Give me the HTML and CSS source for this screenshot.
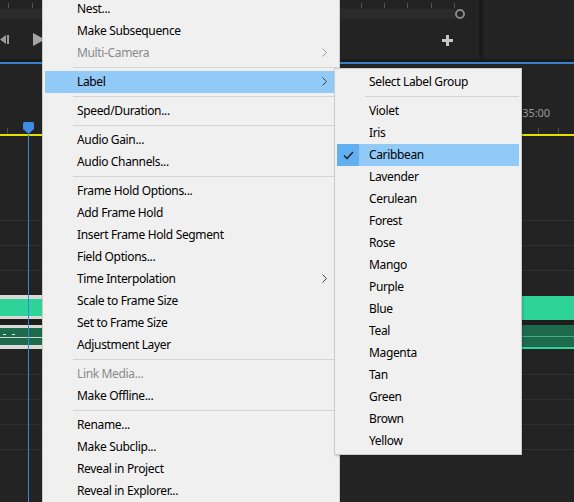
FILE: index.html
```html
<!DOCTYPE html>
<html>
<head>
<meta charset="utf-8">
<link rel="stylesheet" href="styles.css">
</head>
<body>
<div class="app">
  <div class="top">
    <div class="monitor">
      <div class="ruler"></div>
      <div class="zoombar"><div class="ztrack"></div><span class="knob"></span></div>
      <div class="controls">
        <svg class="ic-back" width="10" height="9" viewBox="0 0 10 9"><polygon points="0,4.5 6,0 6,9" fill="#9a9a9a"/><rect x="7" y="0" width="2" height="9" fill="#9a9a9a"/></svg>
        <svg class="ic-play" width="12" height="13" viewBox="0 0 12 13"><polygon points="0,0 12,6.5 0,13" fill="#a6a6a6"/></svg>
        <svg class="ic-plus" width="11" height="11" viewBox="0 0 11 11"><rect x="4" y="0" width="3" height="11" fill="#c6c6c6"/><rect x="0" y="4" width="11" height="3" fill="#c6c6c6"/></svg>
      </div>
    </div>
    <div class="divider"></div>
    <div class="panel2"></div>
  </div>
  <div class="shade"></div>
  <div class="blueline"></div>
  <div class="timeline">
    <div class="tl-ruler">
      <div class="tc"><span>00:00:35:00</span></div>
      <div class="ticks"></div>
    </div>
    <div class="yellow"></div>
    <div class="tracks">
      <div class="blank"></div>
      <div class="row"></div>
      <div class="row"></div>
      <div class="row tall"></div>
      <div class="cliprow">
        <div class="clip sel">
          <div class="c-grey4"></div>
          <div class="c-video"></div>
          <div class="c-grey3"></div>
          <div class="c-gap"></div>
          <div class="c-grey3"></div>
          <div class="c-audio1"></div>
          <div class="c-line"></div>
          <div class="c-audio2"></div>
          <div class="c-grey4"></div>
        </div>
        <div class="clip plain">
          <div class="p-top"></div>
          <div class="p-video"></div>
          <div class="p-gap"></div>
          <div class="p-audio1"></div>
          <div class="p-line"></div>
          <div class="p-audio2"></div>
          <div class="p-bottom"></div>
        </div>
      </div>
      <div class="row nob"></div>
      <div class="row"></div>
      <div class="row"></div>
      <div class="row"></div>
      <div class="row last"></div>
    </div>
  </div>
  <div class="playhead">
    <svg class="ph-head" width="11" height="11" viewBox="0 0 11 11"><path d="M0,1.5 Q0,0 1.5,0 H9.5 Q11,0 11,1.5 V7 L6.5,11 H4.5 L0,7 Z" fill="#3d8de6"/></svg>
    <div class="ph-line"></div>
  </div>
</div>

<div class="menu main">
  <div class="item">Nest...</div>
  <div class="item">Make Subsequence</div>
  <div class="item dis">Multi-Camera<svg class="chev" width="5" height="9" viewBox="0 0 5 9"><polyline points="0.5,0.5 4.5,4.5 0.5,8.5" fill="none" stroke="#9a9a9a" stroke-width="1"/></svg></div>
  <div class="sep"></div>
  <div class="item hi">Label<svg class="chev" width="5" height="9" viewBox="0 0 5 9"><polyline points="0.5,0.5 4.5,4.5 0.5,8.5" fill="none" stroke="#404040" stroke-width="1"/></svg></div>
  <div class="sep"></div>
  <div class="item">Speed/Duration...</div>
  <div class="sep"></div>
  <div class="item">Audio Gain...</div>
  <div class="item">Audio Channels...</div>
  <div class="sep"></div>
  <div class="item">Frame Hold Options...</div>
  <div class="item">Add Frame Hold</div>
  <div class="item">Insert Frame Hold Segment</div>
  <div class="item">Field Options...</div>
  <div class="item">Time Interpolation<svg class="chev" width="5" height="9" viewBox="0 0 5 9"><polyline points="0.5,0.5 4.5,4.5 0.5,8.5" fill="none" stroke="#404040" stroke-width="1"/></svg></div>
  <div class="item">Scale to Frame Size</div>
  <div class="item">Set to Frame Size</div>
  <div class="item">Adjustment Layer</div>
  <div class="sep"></div>
  <div class="item dis">Link Media...</div>
  <div class="item">Make Offline...</div>
  <div class="sep"></div>
  <div class="item">Rename...</div>
  <div class="item">Make Subclip...</div>
  <div class="item">Reveal in Project</div>
  <div class="item">Reveal in Explorer...</div>
</div>

<div class="menu sub">
  <div class="item">Select Label Group</div>
  <div class="sep"></div>
  <div class="item">Violet</div>
  <div class="item">Iris</div>
  <div class="item hi checked"><span class="checkcol"><svg width="11" height="9" viewBox="0 0 11 9"><polyline points="1,4.5 4,7.5 10,1" fill="none" stroke="#1e1e1e" stroke-width="1.4"/></svg></span><span class="txt">Caribbean</span></div>
  <div class="item">Lavender</div>
  <div class="item">Cerulean</div>
  <div class="item">Forest</div>
  <div class="item">Rose</div>
  <div class="item">Mango</div>
  <div class="item">Purple</div>
  <div class="item">Blue</div>
  <div class="item">Teal</div>
  <div class="item">Magenta</div>
  <div class="item">Tan</div>
  <div class="item">Green</div>
  <div class="item">Brown</div>
  <div class="item">Yellow</div>
</div>
</body>
</html>
```
FILE: styles.css
```css
* { box-sizing: border-box; margin: 0; padding: 0; }
html, body { width: 574px; height: 502px; overflow: hidden; }
body { background: #232323; font-family: "Noto Sans", "Open Sans", sans-serif; position: relative; }

.app { width: 574px; height: 502px; position: relative; }

.top { display: flex; height: 59px; }
.monitor { width: 479px; display: flex; flex-direction: column; }
.ruler {
  height: 9px; width: 460px;
  background: repeating-linear-gradient(to right, transparent 0 8.5px, #555 8.5px 9.5px, transparent 9.5px 23.47px) 0 3px / 100% 5px no-repeat;
}
.zoombar { height: 10px; display: flex; align-items: center; }
.ztrack { width: 455px; height: 10px; background: #2b2b2b; }
.knob { width: 10px; height: 10px; border-radius: 50%; border: 2px solid #8a8a8a; }
.controls { height: 40px; display: flex; align-items: center; padding-right: 26px; }
.ic-play { margin-left: 23px; }
.ic-plus { margin-left: auto; margin-top: 2px; }
.divider { width: 4px; background: #1a1a1a; }
.panel2 { flex: 1; background: #232323; }

.shade { height: 3px; background: #1a1a1a; }
.blueline { height: 2px; background: #3580cc; }

.timeline { display: flex; flex-direction: column; }
.tl-ruler { height: 70px; display: flex; flex-direction: column; }
.tc { flex: 1; display: flex; justify-content: flex-end; padding-top: 42px; padding-right: 24px; font-size: 11px; line-height: 14px; color: #9a9a9a; letter-spacing: -0.1px; }
.ticks {
  height: 6px;
  background:
    linear-gradient(#4e4e4e, #4e4e4e) 7px 0 / 1px 100% no-repeat,
    linear-gradient(#4e4e4e, #4e4e4e) 538px 0 / 1px 100% no-repeat,
    linear-gradient(#4e4e4e, #4e4e4e) 558px 0 / 1px 100% no-repeat;
}
.yellow { height: 2px; background: #e2e200; }

.tracks { display: flex; flex-direction: column; }
.blank { height: 84px; }
.row { height: 25px; border-top: 1px solid #303030; }
.row.nob { border-top: none; }
.row.last { height: 60px; }

.cliprow { display: flex; justify-content: space-between; height: 54px; }
.clip { display: flex; flex-direction: column; }
.clip.sel { width: 260px; }
.clip.plain { width: 52px; }
.c-grey4 { height: 4px; background: #d9d9d9; }
.c-grey3 { height: 3px; background: #d9d9d9; }
.c-video { height: 17px; background: #2ed39a; }
.c-gap { height: 6px; background: #1e1e1e; }
.c-audio1 { height: 9px; background-color: #1d6a4f;
  background-image: repeating-linear-gradient(to right, transparent 0 3px, #cfe 3px 6px, transparent 6px 9px);
  background-size: 16px 1px; background-position: 0 6px; background-repeat: no-repeat; }
.c-line { height: 1px; background: #cfd8d3; }
.c-audio2 { height: 7px; background: #1d6a4f; }

.p-top { height: 1px; }
.p-video { height: 24px; background: #2ed39a; }
.p-gap { height: 5px; background: #1e1e1e; }
.p-audio1 { height: 11px; background: #1d6a4f; }
.p-line { height: 1px; background: #3fae80; }
.p-audio2 { height: 10px; background: #1d6a4f; }
.p-bottom { height: 2px; background: #2ed39a; }

.playhead { position: absolute; left: 23px; top: 122px; width: 11px; height: 380px; display: flex; flex-direction: column; align-items: center; }
.ph-head { display: block; }
.ph-line { width: 1px; flex: 1; background: #3a84d4; }

/* menus */
.menu { position: absolute; background: #f0f0f0; border: 1px solid #cccccc; padding: 2px; font-size: 12px; letter-spacing: -0.35px; color: #000; }
.main { left: 42px; top: -5px; width: 298px; }
.sub { left: 334px; top: 68px; width: 188px; box-shadow: 1px 1px 2px rgba(0,0,0,0.2); }
.item { height: 22px; display: flex; align-items: center; padding-left: 32px; padding-bottom: 2px; white-space: nowrap; }
.item.dis { color: #8a8a8a; }
.item.hi { background: #91c9f7; }
.chev { margin-left: auto; margin-right: 10px; }
.sep { height: 1px; margin: 3px 0 3px 28px; background: #d4d4d4; }
.checked { padding-left: 0; padding-bottom: 0; }
.checked .txt { margin-bottom: 2px; }
.checkcol { width: 22px; height: 22px; background: #62aff2; display: flex; align-items: center; justify-content: center; margin-right: 10px; }
```
